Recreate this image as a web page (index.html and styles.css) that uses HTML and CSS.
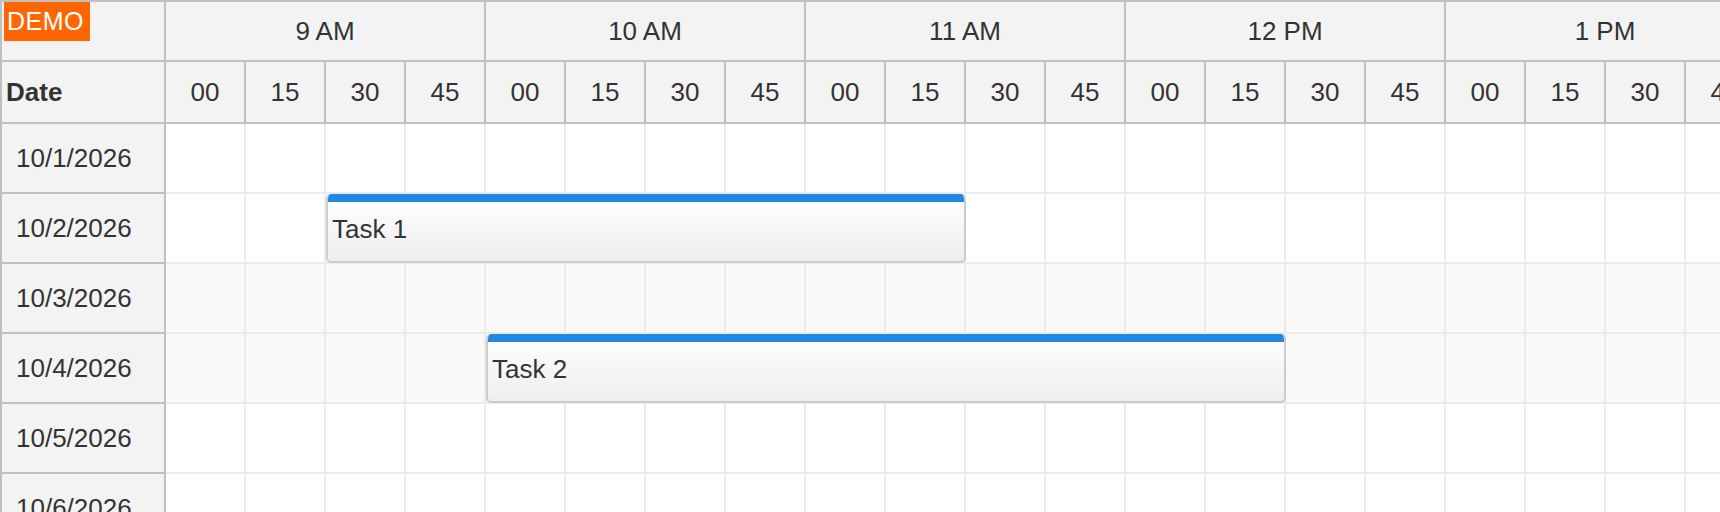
FILE: index.html
```html
<!DOCTYPE html>
<html>
<head>
<meta charset="utf-8">
<link rel="stylesheet" href="styles.css">
</head>
<body>
<div class="scheduler">
  <div class="side">
    <div class="corner">
      <div class="corner-top"><span class="demo">DEMO</span></div>
      <div class="corner-bottom">Date</div>
    </div>
    <div class="rowhead">10/1/2026</div>
    <div class="rowhead">10/2/2026</div>
    <div class="rowhead">10/3/2026</div>
    <div class="rowhead">10/4/2026</div>
    <div class="rowhead">10/5/2026</div>
    <div class="rowhead">10/6/2026</div>
  </div>
  <div class="main">
    <div class="hours">
      <div class="hour">9 AM</div>
      <div class="hour">10 AM</div>
      <div class="hour">11 AM</div>
      <div class="hour">12 PM</div>
      <div class="hour">1 PM</div>
    </div>
    <div class="minutes">
      <div class="min">00</div><div class="min">15</div><div class="min">30</div><div class="min">45</div>
      <div class="min">00</div><div class="min">15</div><div class="min">30</div><div class="min">45</div>
      <div class="min">00</div><div class="min">15</div><div class="min">30</div><div class="min">45</div>
      <div class="min">00</div><div class="min">15</div><div class="min">30</div><div class="min">45</div>
      <div class="min">00</div><div class="min">15</div><div class="min">30</div><div class="min">45</div>
    </div>
    <div class="row"></div>
    <div class="row">
      <div class="event ev1"><div class="bar"></div><div class="ev-text">Task 1</div></div>
    </div>
    <div class="row weekend"></div>
    <div class="row weekend">
      <div class="event ev2"><div class="bar"></div><div class="ev-text">Task 2</div></div>
    </div>
    <div class="row"></div>
    <div class="row"></div>
  </div>
</div>
</body>
</html>
```
FILE: styles.css
```css
html, body {
  margin: 0;
  padding: 0;
  background: #ffffff;
  overflow: hidden;
  width: 1720px;
  height: 512px;
}

.scheduler {
  display: flex;
  font-family: "Liberation Sans", Arial, sans-serif;
  font-size: 26px;
  color: #333333;
  border-top: 2px solid #c0c0c0;
  border-left: 2px solid #c0c0c0;
  width: 1718px;
}

.side {
  flex: 0 0 164px;
  width: 164px;
  display: flex;
  flex-direction: column;
}

.corner {
  background: #f3f3f3;
  border-right: 2px solid #c0c0c0;
  border-bottom: 2px solid #c0c0c0;
  box-sizing: border-box;
  height: 122px;
  display: flex;
  flex-direction: column;
}

.corner-top {
  height: 58px;
  border-bottom: 2px solid #c0c0c0;
  margin-right: -2px;
  position: relative;
}

.demo {
  position: absolute;
  left: 2px;
  top: 0;
  height: 39px;
  width: 86px;
  box-sizing: border-box;
  background: #ff6600;
  color: #ffffff;
  font-size: 25px;
  line-height: 39px;
  padding-left: 3px;
  letter-spacing: 0.5px;
  white-space: nowrap;
}

.corner-bottom {
  height: 60px;
  font-weight: bold;
  display: flex;
  align-items: center;
  padding-left: 4px;
}

.rowhead {
  flex: 0 0 auto;
  height: 68px;
  background: #f3f3f3;
  border-right: 2px solid #c0c0c0;
  border-bottom: 2px solid #c0c0c0;
  display: flex;
  align-items: center;
  padding-left: 14px;
}

.main {
  flex: 0 0 auto;
  display: flex;
  flex-direction: column;
}

.hours {
  display: flex;
  height: 60px;
  box-sizing: border-box;
  background: #f3f3f3;
  border-bottom: 2px solid #c0c0c0;
}

.hour {
  flex: 0 0 320px;
  box-sizing: border-box;
  border-right: 2px solid #c0c0c0;
  display: flex;
  align-items: center;
  justify-content: center;
}

.minutes {
  display: flex;
  height: 62px;
  box-sizing: border-box;
  background: #f3f3f3;
  border-bottom: 2px solid #c0c0c0;
}

.min {
  flex: 0 0 80px;
  box-sizing: border-box;
  border-right: 2px solid #c0c0c0;
  display: flex;
  align-items: center;
  justify-content: center;
}

.row {
  position: relative;
  height: 70px;
  width: 1600px;
  box-sizing: border-box;
  border-bottom: 2px solid #ebebeb;
  background-color: #ffffff;
  background-image: linear-gradient(to right, transparent 78px, #ebebeb 78px, #ebebeb 80px);
  background-size: 80px 100%;
}

.row.weekend {
  background-color: #f9f9f9;
}

.event {
  position: absolute;
  top: 0;
  height: 69px;
  box-sizing: border-box;
  border: 2px solid #cccccc;
  border-top: none;
  border-radius: 5px;
  background: linear-gradient(to bottom, #ffffff 0%, #eeeeee 100%);
  overflow: hidden;
  display: flex;
  flex-direction: column;
}

.ev1 {
  left: 160px;
  width: 640px;
}

.ev2 {
  left: 320px;
  width: 800px;
}

.bar {
  flex: 0 0 8px;
  background: #2188e0;
  margin: 0 -2px;
}

.ev-text {
  flex: 1 1 auto;
  display: flex;
  align-items: center;
  padding-left: 4px;
  padding-bottom: 4px;
}
```
